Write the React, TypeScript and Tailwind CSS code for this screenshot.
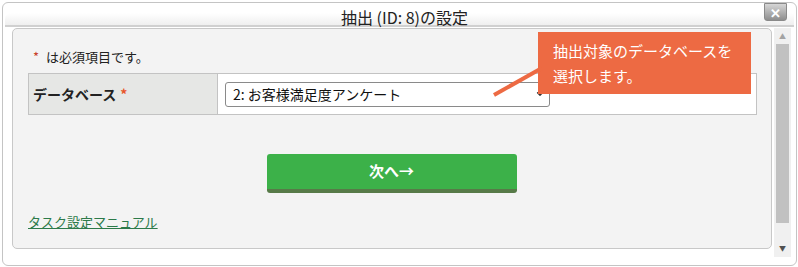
import { ChevronDown } from 'lucide-react';

const font = { fontFamily: '"Noto Sans CJK JP", "Noto Sans", sans-serif' };

export default function App() {
    return (
        <div className="relative h-[267px] w-[798px] overflow-hidden bg-white p-[2px]" style={font}>
            {/* dialog frame */}
            <div className="flex h-[264px] w-[795px] flex-col rounded-[6px] border border-[#c4c4c4] bg-white">
                {/* title bar */}
                <div className="relative mx-[2px] mt-[10px] flex h-[14px] items-center justify-center rounded-tl-[6px] border-b-2 border-[#d0d0d0] bg-[linear-gradient(#ffffff,#efefef)]">
                    <span className="-mt-[4px] ml-[10px] text-[16px] leading-none text-[#222]">抽出 (ID: 8)の設定</span>
                    <div className="absolute right-[7px] -top-[10px] flex h-[18px] w-[23px] items-center justify-center rounded-b-[3px] border border-[#8a8a8a] bg-[linear-gradient(#d6d6d6,#8e8e8e)]">
                        <span className="text-[13px] font-bold leading-none text-white">✕</span>
                    </div>
                </div>

                <div className="flex flex-1 pt-[1px]">
                    {/* content panel */}
                    <div className="ml-[9px] flex h-[221px] w-[760px] flex-col rounded-[5px] border border-[#c8c8c8] bg-[#f3f3f3] pl-[15px] pr-[14px]">
                        <p className="ml-[5px] mt-[19px] text-[13px] leading-[18px] text-[#222]">
                            <span className="mr-[7px] text-[#c8402a]">*</span>は必須項目です。
                        </p>

                        <div className="mt-[7px] flex h-[42px] border border-[#c3c3c3] bg-white">
                            <div className="flex w-[189px] items-center border-r border-[#c3c3c3] bg-[#e6e7e5] pl-[4px] text-[14px] font-bold text-[#222]">
                                データベース <span className="ml-[4px] text-[#e8562a]">*</span>
                            </div>
                            <div className="flex items-center pl-[7px]">
                                <div className="flex h-[25px] w-[325px] items-center justify-between rounded-[3px] border border-[#8a8a8a] bg-white pl-[7px] pr-[4px]">
                                    <span className="text-[14px] text-[#111]">2: お客様満足度アンケート</span>
                                    <ChevronDown size={10} strokeWidth={3} className="text-[#333]" />
                                </div>
                            </div>
                        </div>

                        <div className="mt-[39px] flex justify-center pr-[2px]">
                            <button className="h-[39px] w-[250px] rounded-[3px] border-b-[4px] border-[#577a48] bg-[#3cb149] text-[15px] font-bold text-white">
                                次へ→
                            </button>
                        </div>

                        <a className="mt-[20px] self-start text-[13px] leading-[18px] text-[#2c7a49] underline">
                            タスク設定マニュアル
                        </a>
                    </div>

                    {/* scrollbar */}
                    <div className="ml-[2px] flex h-[229px] w-[17px] flex-col items-center bg-[#f0f0f0]">
                        <span className="mt-[4px] text-[7px] leading-[8px] text-[#a3a3a3]">▲</span>
                        <div className="mt-[4px] h-[179px] w-[13px] bg-[#c1c1c1]" />
                        <span className="mt-[21px] text-[7px] leading-[8px] text-[#505050]">▼</span>
                    </div>
                </div>
            </div>

            {/* callout */}
            <div className="absolute left-[538px] top-[32px] h-[62px] w-[213px] bg-[#ed6a43] px-[15px] pt-[6px] text-[15px] leading-[25px] text-white">
                抽出対象のデータベースを
                <br />
                選択します。
            </div>
            <svg className="absolute left-0 top-0" width="798" height="267">
                <line x1="494" y1="95" x2="542" y2="68" stroke="#ed6a43" strokeWidth="4" />
            </svg>
        </div>
    );
}
